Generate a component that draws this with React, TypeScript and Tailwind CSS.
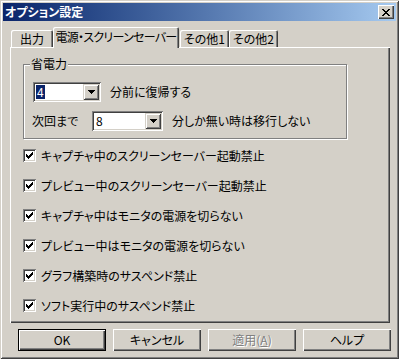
import React from "react";

const FONT = "font-['Noto_Sans_CJK_JP','Noto_Sans',sans-serif] [font-feature-settings:'palt']";

const SUNKEN =
  "shadow-[inset_1px_1px_0_#808080,inset_-1px_-1px_0_#ffffff,inset_2px_2px_0_#404040,inset_-2px_-2px_0_#d4d0c8]";
const RAISED =
  "shadow-[inset_1px_1px_0_#ffffff,inset_-1px_-1px_0_#404040,inset_-2px_-2px_0_#808080]";
const COMBO_BTN =
  "shadow-[inset_1px_1px_0_#d4d0c8,inset_-1px_-1px_0_#404040,inset_2px_2px_0_#ffffff,inset_-2px_-2px_0_#808080]";

function Check() {
  return (
    <svg width="7" height="7" viewBox="0 0 7 7" shapeRendering="crispEdges">
      <path
        fill="#000"
        d="M6 0h1v1h-1z M5 1h2v1h-2z M0 2h1v1h-1z M4 2h3v1h-3z M0 3h2v1h-2z M3 3h3v1h-3z M0 4h5v1h-5z M1 5h3v1h-3z M2 6h1v1h-1z"
      />
    </svg>
  );
}

function Arrow() {
  return (
    <svg width="7" height="4" viewBox="0 0 7 4" shapeRendering="crispEdges">
      <path fill="#000" d="M0 0h7v1h-7z M1 1h5v1h-5z M2 2h3v1h-3z M3 3h1v1h-1z" />
    </svg>
  );
}

function CloseX() {
  return (
    <svg width="8" height="7" viewBox="0 0 8 7" shapeRendering="crispEdges">
      <path
        fill="#000"
        d="M0 0h2v1h-2z M6 0h2v1h-2z M1 1h2v1h-2z M5 1h2v1h-2z M2 2h4v1h-4z M3 3h2v1h-2z M2 4h4v1h-4z M1 5h2v1h-2z M5 5h2v1h-2z M0 6h2v1h-2z M6 6h2v1h-2z"
      />
    </svg>
  );
}

function Combo({ value, width, selected }: { value: string; width: string; selected?: boolean }) {
  return (
    <div className={`${width} h-[20px] bg-white ${SUNKEN} flex items-stretch p-[2px]`}>
      <div className="flex-1 flex items-center pl-[1px]">
        <span
          className={`text-[12px] leading-[14px] px-[1px] ${
            selected ? "bg-[#0a246a] text-white" : "text-black"
          }`}
        >
          {value}
        </span>
      </div>
      <div className={`w-[16px] bg-[#d4d0c8] ${COMBO_BTN} flex items-center justify-center`}>
        <Arrow />
      </div>
    </div>
  );
}

function CheckRow({ label }: { label: string }) {
  return (
    <div className="flex items-center h-[13px]">
      <div className={`w-[13px] h-[13px] bg-white ${SUNKEN} flex items-center justify-center`}>
        <Check />
      </div>
      <span className="ml-[5px] text-[12px] leading-[13px] text-black whitespace-nowrap">{label}</span>
    </div>
  );
}

function Button({
  children,
  isDefault,
  disabled,
}: {
  children: React.ReactNode;
  isDefault?: boolean;
  disabled?: boolean;
}) {
  return (
    <div
      className={`w-[88px] h-[22px] bg-[#d4d0c8] flex ${isDefault ? "border border-black" : ""}`}
    >
      <div
        className={`flex-1 flex items-center justify-center ${RAISED} text-[12px] leading-[14px] ${
          disabled ? "text-[#808080] [text-shadow:1px_1px_0_#ffffff]" : "text-black"
        }`}
      >
        {children}
      </div>
    </div>
  );
}

export default function App() {
  const tabBase =
    "h-[17px] bg-[#d4d0c8] flex items-center justify-center whitespace-nowrap text-[12px] leading-[14px] text-black rounded-tl-[2px] rounded-tr-[2px] shadow-[inset_1px_1px_0_#ffffff,inset_-1px_0_0_#404040,inset_-2px_0_0_#808080]";
  return (
    <div
      className={`${FONT} w-[399px] h-[359px] bg-[#d4d0c8] p-[3px] flex flex-col shadow-[inset_1px_1px_0_#d4d0c8,inset_-1px_-1px_0_#404040,inset_2px_2px_0_#ffffff,inset_-2px_-2px_0_#808080]`}
    >
      {/* Title bar */}
      <div className="h-[18px] flex items-center justify-between bg-gradient-to-r from-[#0a246a] to-[#a6caf0] pl-[2px] pr-[2px]">
        <span className="text-white font-bold text-[12px] leading-[14px]">オプション設定</span>
        <div className={`w-[16px] h-[14px] bg-[#d4d0c8] ${RAISED} flex items-center justify-center`}>
          <CloseX />
        </div>
      </div>

      {/* Tabs */}
      <div className="mt-[6px] ml-[7px] w-[380px] flex flex-col">
        <div className="flex items-end h-[20px] pl-[1px] relative z-10">
          <div className={`${tabBase} w-[42px]`}>出力</div>
          <div className="w-[126px] h-[21px] -mb-px bg-[#d4d0c8] flex items-center justify-center whitespace-nowrap tracking-[-0.7px] text-[12px] leading-[14px] text-black rounded-tl-[2px] rounded-tr-[2px] shadow-[inset_1px_1px_0_#ffffff,inset_-1px_0_0_#404040,inset_-2px_0_0_#808080] pb-[2px]">
            電源・スクリーンセーバー
          </div>
          <div className={`${tabBase} w-[49px] ml-[1px]`}>その他1</div>
          <div className={`${tabBase} w-[49px]`}>その他2</div>
        </div>

        {/* Panel */}
        <div className="h-[276px] bg-[#d4d0c8] pl-[13px] pt-[17px] shadow-[inset_1px_1px_0_#ffffff,inset_-1px_-1px_0_#404040,inset_-2px_-2px_0_#808080] flex flex-col">
          {/* Group box */}
          <div className="relative w-[324px] h-[75px] border border-[#808080] shadow-[1px_1px_0_#ffffff,inset_1px_1px_0_#ffffff] pl-[9px] pt-[17px] flex flex-col">
            <span className="absolute left-[6px] top-[-8px] px-[1px] bg-[#d4d0c8] text-[12px] leading-[14px] text-black">
              省電力
            </span>
            <div className="flex items-center">
              <Combo value="4" width="w-[68px]" selected />
              <span className="ml-[9px] text-[12px] leading-[14px] text-black">分前に復帰する</span>
            </div>
            <div className="flex items-center mt-[9px]">
              <span className="w-[60px] -ml-[1px] text-[12px] leading-[14px] text-black">次回まで</span>
              <Combo value="8" width="w-[71px]" />
              <span className="ml-[9px] text-[12px] leading-[14px] text-black">
                分しか無い時は移行しない
              </span>
            </div>
          </div>

          {/* Checkboxes */}
          <div className="mt-[10px] flex flex-col gap-[17px]">
            <CheckRow label="キャプチャ中のスクリーンセーバー起動禁止" />
            <CheckRow label="プレビュー中のスクリーンセーバー起動禁止" />
            <CheckRow label="キャプチャ中はモニタの電源を切らない" />
            <CheckRow label="プレビュー中はモニタの電源を切らない" />
            <CheckRow label="グラフ構築時のサスペンド禁止" />
            <CheckRow label="ソフト実行中のサスペンド禁止" />
          </div>
        </div>
      </div>

      {/* Buttons */}
      <div className="mt-[6px] ml-[15px] flex gap-[7px]">
        <Button isDefault>OK</Button>
        <Button>キャンセル</Button>
        <Button disabled>
          適用(<span className="underline">A</span>)
        </Button>
        <Button>ヘルプ</Button>
      </div>
    </div>
  );
}
